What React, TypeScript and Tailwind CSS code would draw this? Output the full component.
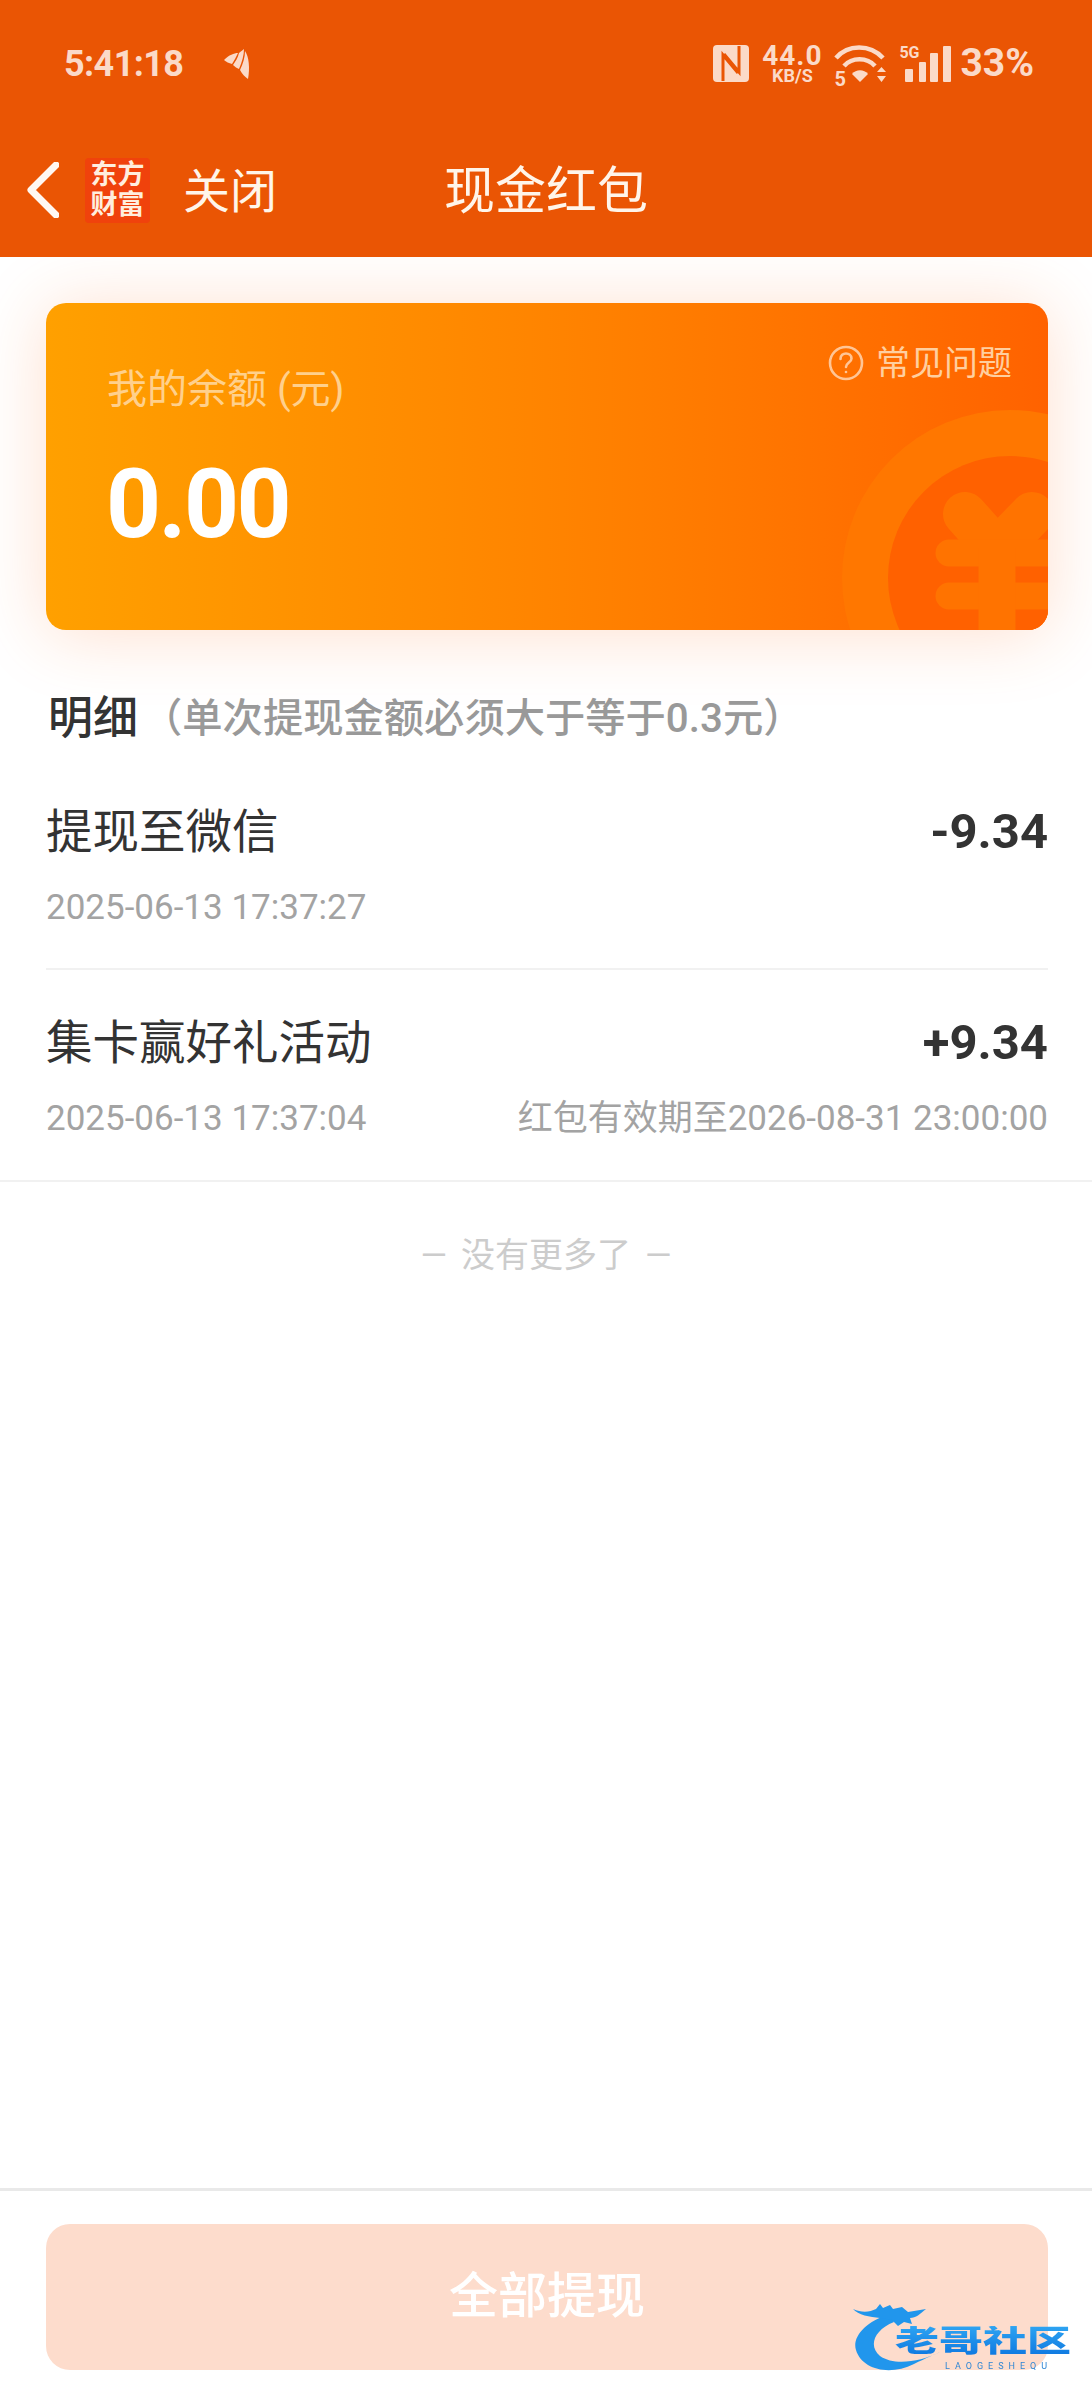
const sans = 'font-["Roboto","Noto_Sans_CJK_SC",sans-serif]';

function FeatherMark() {
  return (
    <svg width="28" height="32" viewBox="0 0 28 32" fill="#fbdac8" className="ml-[40px]">
      <path d="M1 12 C6 7 11 5 15 5 C13 9 11 13 9 16 C6 15 3 14 1 12 Z" />
      <path d="M16 5 C18 3 20 2 21 1 C21 7 19 14 16 21 C14 20 12 19 10 17 C12 14 15 10 16 5 Z" />
      <path d="M22 3 C26 9 27 20 25 31 C22 29 19 26 17 22 C20 16 22 9 22 3 Z" />
    </svg>
  );
}

function NfcIcon() {
  return (
    <svg width="36" height="37" viewBox="0 0 36 37">
      <rect width="36" height="37" rx="4" fill="#fbdac8" />
      <path d="M10 36 V10 L25 28" fill="none" stroke="#ea5504" strokeWidth="3" />
      <path d="M26 1 V27 L11 9" fill="none" stroke="#ea5504" strokeWidth="3" />
    </svg>
  );
}

function WifiIcon() {
  return (
    <svg width="52" height="40" viewBox="0 0 52 40" fill="none" stroke="#fbdac8">
      <path d="M2 14 C14 0 36 0 49 14" strokeWidth="4.5" />
      <path d="M10 22 C18 13 33 13 41 22" strokeWidth="4.5" />
      <path d="M18 30 L26 38 L34 30 C30 25 22 25 18 30 Z" fill="#fbdac8" stroke="none" />
      <path d="M43 28 L47.5 23 L52 28 Z M43 32 H52 L47.5 38 Z" fill="#fbdac8" stroke="none" />
    </svg>
  );
}

function SignalIcon() {
  return (
    <svg width="46" height="36" viewBox="0 0 46 36" fill="#fbdac8">
      <rect x="0" y="23" width="8" height="13" rx="1" />
      <rect x="14" y="16" width="7" height="20" rx="1" />
      <rect x="25" y="7" width="8" height="29" rx="1" />
      <rect x="38" y="0" width="8" height="36" rx="1" />
    </svg>
  );
}

function StatusBar() {
  return (
    <div className="flex h-[126px] items-center justify-between pl-[64px] pr-[58px] pt-[1px] text-[#fbdac8]">
      <div className="flex items-center">
        <span className="text-[36px] leading-none font-bold tracking-[-0.6px] font-['Roboto',sans-serif]">5:41:18</span>
        <FeatherMark />
      </div>
      <div className="flex items-center font-['Roboto',sans-serif]">
        <NfcIcon />
        <div className="ml-[12px] flex w-[62px] flex-col items-center font-bold">
          <span className="text-[28px] leading-[24px] tracking-[1px]">44.0</span>
          <span className="text-[18px] leading-[15px]">KB/S</span>
        </div>
        <div className="relative ml-[11px]">
          <WifiIcon />
          <span className="absolute bottom-[-5px] left-0 text-[20px] leading-none font-bold">5</span>
        </div>
        <div className="relative ml-[19px]">
          <SignalIcon />
          <span className="absolute left-[-6px] top-[-1px] text-[16px] leading-none font-bold">5G</span>
        </div>
        <span className="ml-[9px] text-[39px] leading-none font-bold">33%</span>
      </div>
    </div>
  );
}

function NavBar() {
  return (
    <div className={`flex h-[131px] items-center pb-[3px] pl-[27px] text-white ${sans}`}>
      <svg width="32" height="56" viewBox="0 0 32 56" fill="none" stroke="#fff8f2" strokeWidth="7" strokeLinecap="round" strokeLinejoin="round">
        <path d="M29 3 L4 28 L29 53" />
      </svg>
      <div className="ml-[26px] flex h-[65px] w-[65px] flex-col items-center justify-center rounded-[4px] bg-[#f0420c] text-[27px] leading-[30px] font-bold text-[#ffeede]">
        <span>东方</span>
        <span>财富</span>
      </div>
      <span className="ml-[33px] mt-[3px] text-[47px] leading-none text-[#fff5ea]">关闭</span>
      <span className="ml-[167px] mt-[3px] text-[51px] leading-none text-[#fff5ea]">现金红包</span>
    </div>
  );
}

function BalanceCard() {
  return (
    <div className="relative h-[327px] overflow-hidden rounded-[20px] bg-gradient-to-r from-[#ffa000] via-[#ff8400] to-[#ff6200] pl-[60px] pt-[67px] shadow-[0_4px_70px_rgba(255,110,30,0.22)]">
      <svg className="absolute right-0 top-[107px]" width="206" height="220" viewBox="0 0 206 220">
        <circle cx="168" cy="168" r="168" fill="#ff7700" />
        <circle cx="168" cy="168" r="122" fill="#ff6100" />
        <g fill="none" stroke="#ff7300" strokeLinecap="round" strokeLinejoin="round">
          <path d="M123 104 L155 140 L190 104" strokeWidth="44" />
          <path d="M107 143 H220" strokeWidth="27" />
          <path d="M107 186 H220" strokeWidth="27" />
          <path d="M155 138 V240" strokeWidth="37" strokeLinecap="butt" />
        </g>
      </svg>
      <div className="absolute right-[36px] top-[42px] flex items-center text-[34px] leading-none text-[#ffcf9f]">
        <svg width="36" height="36" viewBox="0 0 36 36" fill="none" stroke="#ffc596" strokeWidth="2.6" strokeLinecap="round">
          <circle cx="18" cy="18" r="16" />
          <path d="M12.5 14 C12.5 6.5 23.5 7 23.5 13.5 C23.5 17.5 18 17.5 18 22" />
          <circle cx="18" cy="27" r="1.3" fill="#ffc596" stroke="none" />
        </svg>
        <span className="ml-[12px]">常见问题</span>
      </div>
      <div className={`relative ml-[1px] text-[40px] leading-none text-[#ffd08c] ${sans}`}>我的余额 (元)</div>
      <div className="relative mt-[38px] text-[96px] leading-[112px] font-bold tracking-[-2.5px] text-white font-['Roboto',sans-serif]">0.00</div>
    </div>
  );
}

type Entry = { title: string; time: string; amount: string; note?: string };

function EntryBody({ title, time, amount, note }: Entry) {
  return (
    <>
      <div className="flex items-center justify-between">
        <span className="text-[46.5px] leading-[60px] text-[#333333]">{title}</span>
        <span className="text-[49px] leading-[60px] font-bold text-[#333333] font-['Roboto',sans-serif]">{amount}</span>
      </div>
      <div className="mt-[24px] flex items-center justify-between text-[35px] leading-[44px] text-[#a3a3a3]">
        <span>{time}</span>
        {note ? <span>{note}</span> : null}
      </div>
    </>
  );
}

function Watermark() {
  return (
    <div className="absolute left-[850px] top-[2300px] h-[76px] w-[228px] blur-[0.6px]">
      <svg className="absolute left-0 top-0" width="100" height="76" viewBox="0 0 100 76" fill="#2196ec">
        <path d="M40 14 C14 22 2 38 6 50 C12 70 40 76 64 64 C76 58 86 54 90 52 C70 62 44 66 30 56 C18 46 24 30 44 22 Z" />
        <path d="M3 9 C12 13 20 12 26 9 L30 4 L33 8 L40 5 L43 9 L52 7 L58 12 L76 9 C70 14 66 18 60 18 L62 24 L54 22 L48 26 L42 20 L30 18 C20 17 8 15 3 9 Z" />
      </svg>
      <span className={`absolute left-[45px] top-[19px] origin-center scale-y-[0.68] whitespace-nowrap bg-gradient-to-b from-[#2ea4f2] to-[#0f78e0] bg-clip-text text-[44px] leading-[44px] font-black text-transparent ${sans}`}>老哥社区</span>
      <span className="absolute left-[95px] top-[62px] whitespace-nowrap text-[9px] leading-none tracking-[5px] text-[#2f86d4] font-['Roboto',sans-serif]">LAOGESHEQU</span>
    </div>
  );
}

export default function App() {
  return (
    <div className={`relative flex h-[2400px] w-[1092px] flex-col overflow-hidden bg-white ${sans}`}>
      <section className="order-2 relative z-0 pl-[46px] pr-[44px] pt-[46px]">
        <BalanceCard />
      </section>

      <header className="order-1 relative z-10 h-[257px] shrink-0 bg-[#ea5504]">
        <StatusBar />
        <NavBar />
      </header>

      <main className="order-3 relative flex-1">
        <h2 className="mt-[63px] flex items-center pl-[48px] text-[45px] leading-[52px] font-medium text-[#333333]">
          明细
          <span className="ml-[4px] text-[40.3px] font-medium text-[#999999]">（单次提现金额必须大于等于0.3元）</span>
        </h2>

        <div className="ml-[46px] mr-[44px] mt-[57px] border-b-2 border-[#f1f1f1] pb-[38px]">
          <EntryBody title="提现至微信" time="2025-06-13 17:37:27" amount="-9.34" />
        </div>
        <div className="border-b-2 border-[#f1f1f1] pb-[39px] pl-[46px] pr-[44px] pt-[43px]">
          <EntryBody title="集卡赢好礼活动" time="2025-06-13 17:37:04" amount="+9.34" note="红包有效期至2026-08-31 23:00:00" />
        </div>

        <p className="mt-[51px] flex justify-center gap-[14px] text-[34px] leading-[44px] text-[#cccccc]">
          <span>—</span>
          <span>没有更多了</span>
          <span>—</span>
        </p>
      </main>

      <footer className="order-4 h-[212px] shrink-0 border-t-[3px] border-[#e9e9e9] pl-[46px] pr-[44px] pt-[33px]">
        <div className="flex h-[146px] items-center justify-center rounded-[24px] bg-[#fddccc] text-[49px] font-medium text-white">
          全部提现
        </div>
      </footer>

      <Watermark />
    </div>
  );
}
